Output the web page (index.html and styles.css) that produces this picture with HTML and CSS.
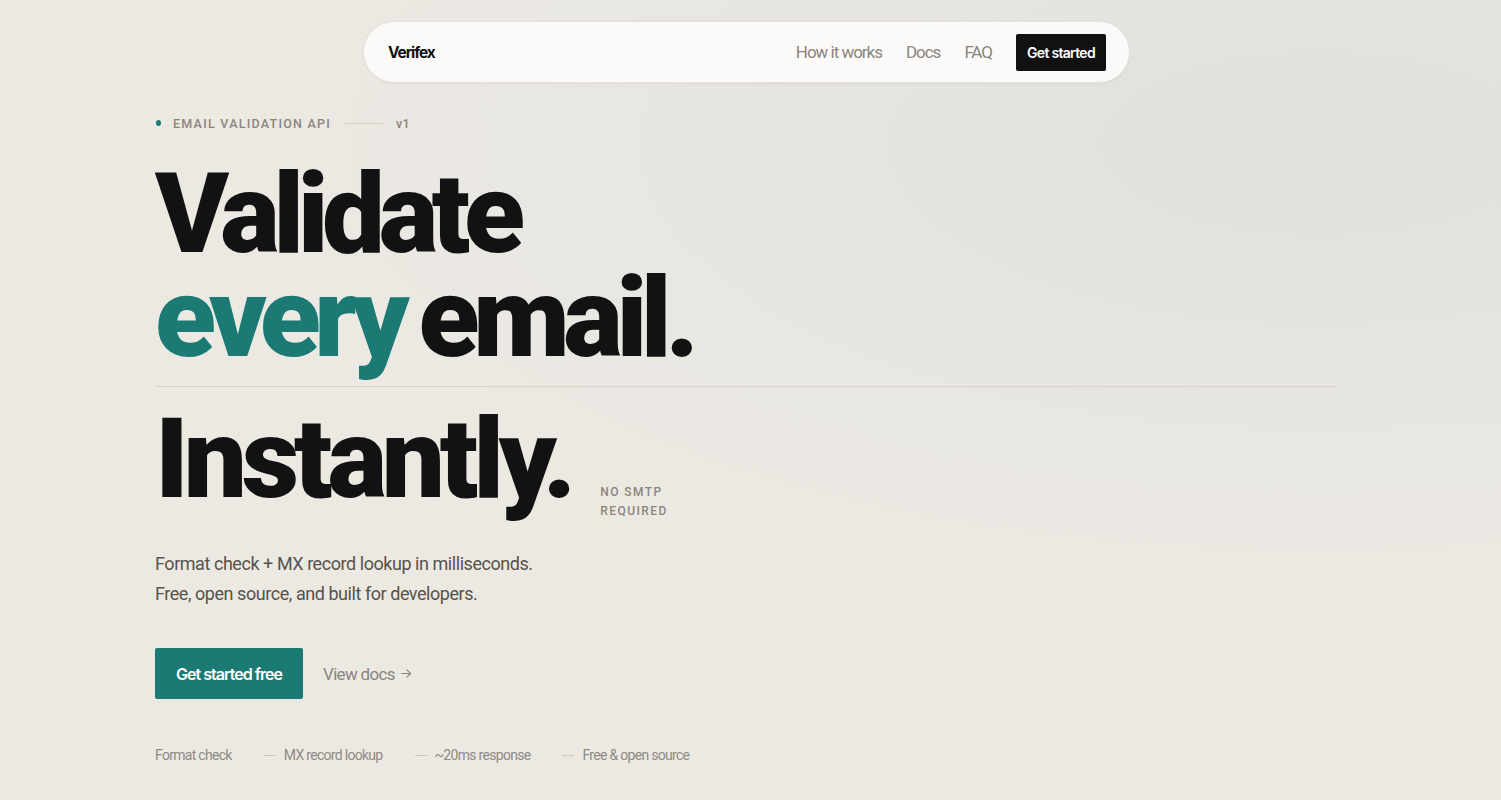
FILE: index.html
```html
<!DOCTYPE html>
<html lang="en">
<head>
<meta charset="utf-8">
<title>Verifex — Email validation API</title>
<link rel="stylesheet" href="styles.css">
</head>
<body>
<header class="topbar">
  <nav class="nav">
    <a class="brand" href="#">Verifex</a>
    <div class="nav-links">
      <a href="#">How it works</a>
      <a href="#">Docs</a>
      <a href="#">FAQ</a>
      <a class="nav-cta" href="#">Get started</a>
    </div>
  </nav>
</header>
<main class="hero">
  <div class="eyebrow">
    <span class="dot"></span>
    <span class="eyebrow-text">EMAIL VALIDATION API</span>
    <span class="eyebrow-line"></span>
    <span class="eyebrow-ver">v1</span>
  </div>
  <h1 class="headline"><span class="hl-line">Validate</span><span class="hl-line"><span class="accent">every</span> email.</span></h1>
  <div class="rule"></div>
  <div class="instant-row">
    <div class="headline headline-instant"><span class="hl-line">Instantly.</span></div>
    <div class="side-note">NO SMTP<br>REQUIRED</div>
  </div>
  <p class="lead">Format check + MX record lookup in milliseconds.<br>Free, open source, and built for developers.</p>
  <div class="actions">
    <a class="btn-primary" href="#">Get started free</a>
    <a class="btn-link" href="#">View docs <svg class="arrow" viewBox="0 0 12 12" width="11" height="11" aria-hidden="true"><path d="M1 6h9.5M6.5 2l4 4-4 4" fill="none" stroke="currentColor" stroke-width="1.2" stroke-linecap="round" stroke-linejoin="round"/></svg></a>
  </div>
  <ul class="features">
    <li>Format check</li>
    <li><span class="dash"></span>MX record lookup</li>
    <li><span class="dash"></span>~20ms response</li>
    <li><span class="dash"></span>Free &amp; open source</li>
  </ul>
</main>
</body>
</html>
```
FILE: styles.css
```css
html, body {
  margin: 0;
  padding: 0;
  height: 100%;
}
body {
  font-family: Roboto, "Liberation Sans", Arial, sans-serif;
  color: #111;
  background-color: #ece9e3;
  background-image:
    radial-gradient(ellipse 70% 55% at 88% 18%, #e0e1dc 0%, rgba(224,225,220,0.6) 40%, rgba(236,233,227,0) 100%);
  background-repeat: no-repeat;
  min-height: 800px;
  overflow: hidden;
}
a { text-decoration: none; color: inherit; }

.topbar {
  padding-top: 21px;
  padding-left: 363px;
}
.nav {
  box-sizing: border-box;
  width: 767px;
  height: 62px;
  border-radius: 31px;
  background: #fbfaf8;
  border: 1px solid #e6e2db;
  box-shadow: 0 1px 3px rgba(60, 50, 40, 0.06);
  display: flex;
  align-items: center;
  justify-content: space-between;
  padding: 0 23px 0 24px;
}
.brand {
  font-family: Inter, Roboto, sans-serif;
  font-weight: 700;
  font-size: 15.5px;
  letter-spacing: -0.07em;
  color: #111;
}
.nav-links {
  display: flex;
  align-items: center;
  gap: 24px;
}
.nav-links a {
  font-size: 17px;
  letter-spacing: -0.06em;
  color: #8a857f;
}
.nav-links a.nav-cta {
  background: #111;
  color: #fff;
  font-family: Inter, Roboto, sans-serif;
  font-weight: 600;
  font-size: 14px;
  letter-spacing: -0.05em;
  height: 37px;
  width: 90px;
  display: flex;
  align-items: center;
  justify-content: center;
  border-radius: 2px;
}

.hero {
  width: 1183px;
  margin-left: 155px;
  margin-top: 32px;
}
.eyebrow {
  display: flex;
  align-items: center;
  height: 16px;
}
.dot {
  width: 5px;
  height: 6px;
  border-radius: 50%;
  background: #1b7a72;
  margin-left: 1px;
  margin-right: 12px;
}
.eyebrow-text, .eyebrow-ver {
  font-size: 12.5px;
  font-weight: 500;
  letter-spacing: 0.1em;
  color: #8b857e;
}
.eyebrow-line {
  width: 38px;
  height: 1px;
  background: #d2cdc5;
  margin: 0 13px 0 14px;
}
.eyebrow-ver {
  letter-spacing: 0.02em;
}

.headline {
  margin: 31px 0 0;
  font-family: Roboto, Inter, sans-serif;
  font-weight: 900;
  font-size: 112px;
  line-height: 104px;
  letter-spacing: -0.057em;
  word-spacing: -6px;
  color: #121212;
}
.headline-instant {
  letter-spacing: -0.046em;
}
.hl-line {
  display: block;
  height: 104px;
}
.accent {
  color: #1b7b74;
}
.rule {
  height: 1px;
  background: #d8d3cc;
  margin-top: 16px;
}
.instant-row {
  display: flex;
  align-items: flex-end;
  margin-top: 20px;
}
.instant-row .headline {
  margin: 0;
}
.side-note {
  margin-left: 29px;
  margin-bottom: -10px;
  font-size: 12px;
  line-height: 19px;
  font-weight: 500;
  letter-spacing: 0.12em;
  color: #8b857e;
}
.lead {
  margin: 38px 0 0;
  font-size: 18px;
  line-height: 30px;
  letter-spacing: -0.025em;
  color: #57524c;
}
.actions {
  display: flex;
  align-items: center;
  margin-top: 39px;
  gap: 20px;
}
.btn-primary {
  width: 148px;
  height: 51px;
  display: flex;
  align-items: center;
  justify-content: center;
  background: #1b7a73;
  color: #fff;
  font-family: Inter, Roboto, sans-serif;
  font-weight: 600;
  font-size: 16px;
  letter-spacing: -0.06em;
  border-radius: 2px;
}
.btn-link {
  display: flex;
  align-items: center;
  font-size: 17px;
  letter-spacing: -0.04em;
  color: #8a857f;
}
.arrow {
  margin-left: 6px;
}
.features {
  list-style: none;
  margin: 46px 0 0;
  padding: 0;
  display: flex;
  align-items: center;
  font-size: 14px;
  line-height: 20px;
  letter-spacing: -0.05em;
  color: #8f8a84;
}
.features li {
  display: flex;
  align-items: center;
}
.dash {
  display: inline-block;
  width: 12px;
  height: 1px;
  background: #cfc9c1;
  margin: 0 8px 0 32px;
}
```
